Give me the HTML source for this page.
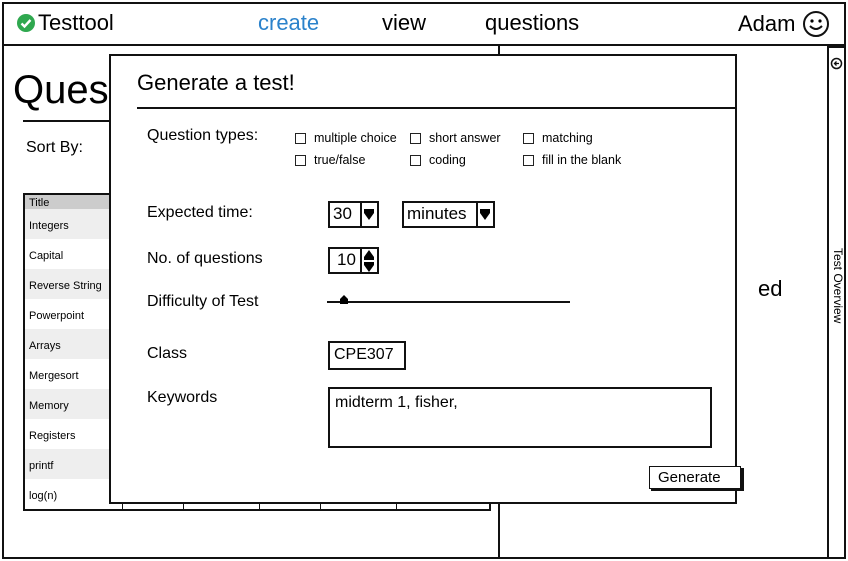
<!DOCTYPE html>
<html><head><style>
*{margin:0;padding:0;box-sizing:border-box}
body{width:848px;height:561px;background:#fff;position:relative;overflow:hidden;font-family:"Liberation Sans",sans-serif;color:#000}
.a{position:absolute}
.t{position:absolute;white-space:nowrap;line-height:1}
.cb{position:absolute;width:11px;height:11px;border:1.5px solid #222;background:#fff}
.row{position:absolute;left:25px;width:85px;height:30px;font-size:11px;padding:11px 0 0 4px}
</style></head><body>
<div class="a" style="left:2px;top:2px;width:844px;height:44px;border:2px solid #111"></div>
<svg class="a" style="left:16px;top:13px" width="20" height="20"><circle cx="10" cy="10" r="9" fill="#2fa84f"/><path d="M5.5 10.5l3 3 6-6.5" stroke="#fff" stroke-width="2.4" fill="none"/></svg>
<div class="t" style="left:38px;top:12px;font-size:22px">Testtool</div>
<div class="t" style="left:258px;top:12px;font-size:22px;color:#2b82cb">create</div>
<div class="t" style="left:382px;top:12px;font-size:22px">view</div>
<div class="t" style="left:485px;top:12px;font-size:22px">questions</div>
<div class="t" style="left:738px;top:13px;font-size:22px">Adam</div>
<svg class="a" style="left:802px;top:10px" width="28" height="28"><circle cx="14" cy="14" r="12" fill="none" stroke="#111" stroke-width="2"/><circle cx="10" cy="11" r="1.6"/><circle cx="18" cy="11" r="1.6"/><path d="M8 16q6 6 12 0" stroke="#111" stroke-width="2" fill="none"/></svg>
<div class="a" style="left:2px;top:44px;width:498px;height:515px;border:2px solid #111;border-top:none"></div>
<div class="a" style="left:498px;top:44px;width:331px;height:515px;border:2px solid #111;border-top:none"></div>
<div class="a" style="left:827px;top:46px;width:19px;height:513px;border:2px solid #111"></div>
<svg class="a" style="left:830px;top:57px" width="13" height="13"><circle cx="6.5" cy="6.5" r="5" fill="none" stroke="#111" stroke-width="1.5"/><path d="M9 6.5H4.5M6.5 4.5l-2 2 2 2" stroke="#111" stroke-width="1.3" fill="none"/></svg>
<div class="t" style="left:830px;top:248px;font-size:12px;transform-origin:0 0;transform:translate(14px,0) rotate(90deg)">Test Overview</div>
<div class="t" style="left:13px;top:70px;font-size:40px">Ques</div>
<div class="a" style="left:23px;top:120px;width:90px;height:2px;background:#111"></div>
<div class="t" style="left:26px;top:140px;font-size:16px">Sort By:</div>
<div class="t" style="left:758px;top:278px;font-size:22px">ed</div>
<div class="a" style="left:23px;top:193px;width:468px;height:318px;border:2px solid #111;background:#fff"></div>
<div class="a" style="left:122px;top:500px;width:1px;height:9px;background:#111"></div>
<div class="a" style="left:183px;top:500px;width:1px;height:9px;background:#111"></div>
<div class="a" style="left:259px;top:500px;width:1px;height:9px;background:#111"></div>
<div class="a" style="left:320px;top:500px;width:1px;height:9px;background:#111"></div>
<div class="a" style="left:396px;top:500px;width:1px;height:9px;background:#111"></div>
<div class="a" style="left:25px;top:195px;width:90px;height:14px;background:#ccc;font-size:11px;padding:2px 0 0 4px">Title</div>
<div class="row" style="top:209px;background:#eee">Integers</div>
<div class="row" style="top:239px">Capital</div>
<div class="row" style="top:269px;background:#eee">Reverse String</div>
<div class="row" style="top:299px">Powerpoint</div>
<div class="row" style="top:329px;background:#eee">Arrays</div>
<div class="row" style="top:359px">Mergesort</div>
<div class="row" style="top:389px;background:#eee">Memory</div>
<div class="row" style="top:419px">Registers</div>
<div class="row" style="top:449px;background:#eee">printf</div>
<div class="row" style="top:479px">log(n)</div>
<div class="a" style="left:109px;top:54px;width:628px;height:450px;border:2px solid #111;background:#fff"></div>
<div class="t" style="left:137px;top:72px;font-size:22px">Generate a test!</div>
<div class="a" style="left:137px;top:107px;width:600px;height:2px;background:#111"></div>
<div class="t" style="left:147px;top:128px;font-size:16px">Question types:</div>
<div class="cb" style="left:295px;top:133px"></div><div class="t" style="left:314px;top:132px;font-size:12.5px">multiple choice</div>
<div class="cb" style="left:410px;top:133px"></div><div class="t" style="left:429px;top:132px;font-size:12.5px">short answer</div>
<div class="cb" style="left:523px;top:133px"></div><div class="t" style="left:542px;top:132px;font-size:12.5px">matching</div>
<div class="cb" style="left:295px;top:155px"></div><div class="t" style="left:314px;top:154px;font-size:12.5px">true/false</div>
<div class="cb" style="left:410px;top:155px"></div><div class="t" style="left:429px;top:154px;font-size:12.5px">coding</div>
<div class="cb" style="left:523px;top:155px"></div><div class="t" style="left:542px;top:154px;font-size:12.5px">fill in the blank</div>
<div class="t" style="left:147px;top:205px;font-size:16px">Expected time:</div>
<div class="a" style="left:328px;top:201px;width:51px;height:27px;border:2px solid #111"></div>
<div class="a" style="left:360px;top:203px;width:1.5px;height:23px;background:#111"></div>
<div class="t" style="left:333px;top:205px;font-size:17px">30</div>
<svg class="a" style="left:364px;top:209px" width="10" height="11"><path d="M0 0h10v4l-5 7-5-7z"/></svg>
<div class="a" style="left:402px;top:201px;width:93px;height:27px;border:2px solid #111"></div>
<div class="a" style="left:476px;top:203px;width:1.5px;height:23px;background:#111"></div>
<div class="t" style="left:407px;top:205px;font-size:17px">minutes</div>
<svg class="a" style="left:480px;top:209px" width="10" height="11"><path d="M0 0h10v4l-5 7-5-7z"/></svg>
<div class="t" style="left:147px;top:251px;font-size:16px">No. of questions</div>
<div class="a" style="left:328px;top:247px;width:51px;height:27px;border:2px solid #111"></div>
<div class="a" style="left:360px;top:249px;width:1.5px;height:23px;background:#111"></div>
<div class="t" style="left:337px;top:251px;font-size:17px">10</div>
<svg class="a" style="left:364px;top:250px" width="10" height="22"><path d="M5 0l5 7v3H0V7zM0 12h10v3l-5 7-5-7z"/></svg>
<div class="t" style="left:147px;top:294px;font-size:16px">Difficulty of Test</div>
<div class="a" style="left:327px;top:301px;width:243px;height:2px;background:#111"></div>
<svg class="a" style="left:339px;top:295px" width="10" height="10"><path d="M5 0l4 4v5H1V4z"/></svg>
<div class="t" style="left:147px;top:346px;font-size:16px">Class</div>
<div class="a" style="left:328px;top:341px;width:78px;height:29px;border:2px solid #111"></div>
<div class="t" style="left:334px;top:347px;font-size:16px">CPE307</div>
<div class="t" style="left:147px;top:390px;font-size:16px">Keywords</div>
<div class="a" style="left:328px;top:387px;width:384px;height:61px;border:2px solid #111"></div>
<div class="t" style="left:335px;top:395px;font-size:16px">midterm 1, fisher,</div>
<div class="a" style="left:651px;top:468px;width:93px;height:23px;background:#111"></div>
<div class="a" style="left:649px;top:466px;width:92px;height:23px;border:1.5px solid #111;background:#fff"></div>
<div class="t" style="left:658px;top:470px;font-size:15px">Generate</div>
</body></html>
